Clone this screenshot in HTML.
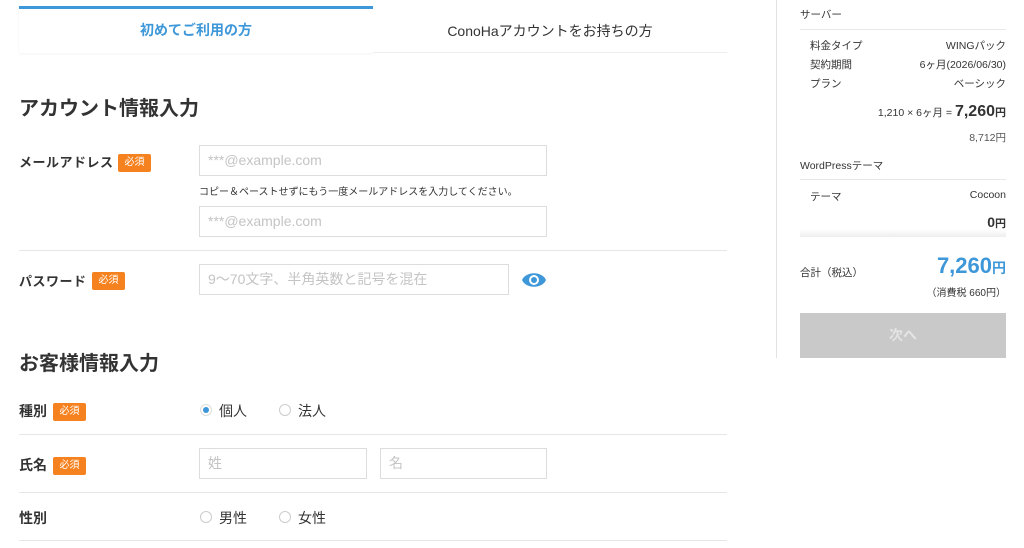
<!DOCTYPE html>
<html><head><meta charset="utf-8"><style>
body{margin:0;width:1024px;height:548px;background:#fff;position:relative;overflow:hidden;font-family:"Liberation Sans","Noto Sans CJK JP",sans-serif;color:#333}
.a{position:absolute;white-space:nowrap}
.tab{position:absolute;top:6px;height:47px;width:354px;text-align:center;line-height:48px;font-size:14px;box-sizing:border-box}
.h{font-size:20px;font-weight:bold;color:#333}
.lb{font-size:14px;font-weight:bold}
.bd{position:absolute;background:#f5821f;color:#fff;font-size:10px;width:33px;height:18px;line-height:18px;text-align:center;border-radius:2px}
.in{position:absolute;border:1px solid #ddd;box-sizing:border-box;font-size:14px;color:#c4c4c4;padding-left:8px;line-height:29px}
.hr{position:absolute;left:19px;width:708px;height:1px;background:#e6e6e6}
.rd{position:absolute;width:12px;height:12px;border:1px solid #ccc;border-radius:50%;box-sizing:border-box}
.s{font-size:10.5px;color:#333}
.sl{position:absolute;left:800px;width:206px;height:1px;background:#e8e8e8}
</style></head><body>
<div class="tab" style="left:19px;border-top:3px solid #3d97d8;color:#3d97d8;font-weight:bold;line-height:42px;box-shadow:0 1px 3px rgba(0,0,0,.05)">初めてご利用の方</div>
<div class="tab" style="left:373px;border-bottom:1px solid #eee;background:#fff;color:#333;line-height:50px">ConoHaアカウントをお持ちの方</div>

<div class="a h" style="left:19px;top:92px">アカウント情報入力</div>
<div class="a lb" style="left:19px;top:152px;font-size:13px;letter-spacing:0.5px">メールアドレス</div>
<div class="bd" style="left:118px;top:154px">必須</div>
<div class="in" style="left:199px;top:145px;width:348px;height:31px">***@example.com</div>
<div class="a" style="left:199px;top:183px;font-size:10px;color:#333">コピー＆ペーストせずにもう一度メールアドレスを入力してください。</div>
<div class="in" style="left:199px;top:206px;width:348px;height:31px">***@example.com</div>
<div class="hr" style="top:250px"></div>
<div class="a lb" style="left:19px;top:271px;font-size:13px;letter-spacing:0.5px">パスワード</div>
<div class="bd" style="left:92px;top:272px">必須</div>
<div class="in" style="left:199px;top:264px;width:310px;height:31px">9〜70文字、半角英数と記号を混在</div>
<svg class="a" style="left:521px;top:269px" width="26" height="22" viewBox="0 0 26 22"><path d="M1 11C5 2 21 2 25 11C21 20 5 20 1 11Z" fill="#3d97d8"/><circle cx="13" cy="11" r="5" fill="#fff"/><circle cx="13" cy="11" r="3" fill="#3d97d8"/></svg>

<div class="a h" style="left:19px;top:347px">お客様情報入力</div>
<div class="a lb" style="left:19px;top:401px">種別</div>
<div class="bd" style="left:53px;top:403px">必須</div>
<div class="rd" style="left:200px;top:404px;border-color:#ddd"></div><div class="a" style="left:203px;top:407px;width:6px;height:6px;border-radius:50%;background:#3d97d8"></div>
<div class="a" style="left:219px;top:401px;font-size:14px">個人</div>
<div class="rd" style="left:279px;top:404px"></div>
<div class="a" style="left:298px;top:401px;font-size:14px">法人</div>
<div class="hr" style="top:434px"></div>
<div class="a lb" style="left:19px;top:455px">氏名</div>
<div class="bd" style="left:53px;top:457px">必須</div>
<div class="in" style="left:199px;top:448px;width:168px;height:31px">姓</div>
<div class="in" style="left:380px;top:448px;width:167px;height:31px">名</div>
<div class="hr" style="top:492px"></div>
<div class="a lb" style="left:19px;top:508px">性別</div>
<div class="rd" style="left:200px;top:511px"></div>
<div class="a" style="left:219px;top:508px;font-size:14px">男性</div>
<div class="rd" style="left:279px;top:511px"></div>
<div class="a" style="left:298px;top:508px;font-size:14px">女性</div>
<div class="hr" style="top:540px"></div>

<div class="a" style="left:776px;top:0;width:1px;height:358px;background:#e2e2e2"></div>
<div class="a s" style="left:800px;top:7px">サーバー</div>
<div class="sl" style="top:29px"></div>
<div class="a s" style="left:810px;top:38px">料金タイプ</div><div class="a s" style="right:18px;top:38px">WINGパック</div>
<div class="a s" style="left:810px;top:57px">契約期間</div><div class="a s" style="right:18px;top:57px">6ヶ月(2026/06/30)</div>
<div class="a s" style="left:810px;top:76px">プラン</div><div class="a s" style="right:18px;top:76px">ベーシック</div>
<div class="a s" style="right:18px;top:103px">1,210 × 6ヶ月 = <b style="font-size:16px">7,260</b><b style="font-size:11px">円</b></div>
<div class="a s" style="right:18px;top:130px;color:#555">8,712円</div>
<div class="a s" style="left:800px;top:158px">WordPressテーマ</div>
<div class="sl" style="top:179px"></div>
<div class="a s" style="left:810px;top:189px">テーマ</div><div class="a s" style="right:18px;top:189px">Cocoon</div>
<div class="a" style="left:800px;top:229px;width:206px;height:8px;background:linear-gradient(#fff,#eee)"></div>
<div class="a s" style="right:18px;top:214px"><b style="font-size:14px">0</b><b style="font-size:11px">円</b></div>
<div class="a s" style="left:800px;top:265px">合計（税込）</div>
<div class="a" style="right:18px;top:253px;color:#3d97d8;font-weight:bold"><span style="font-size:22px">7,260</span><span style="font-size:14px">円</span></div>
<div class="a s" style="right:18px;top:284px;font-size:10px">（消費税 660円）</div>
<div class="a" style="left:800px;top:313px;width:206px;height:45px;background:#c9c9c9;color:#e4e4e4;font-size:14px;font-weight:bold;text-align:center;line-height:45px">次へ</div>
</body></html>
